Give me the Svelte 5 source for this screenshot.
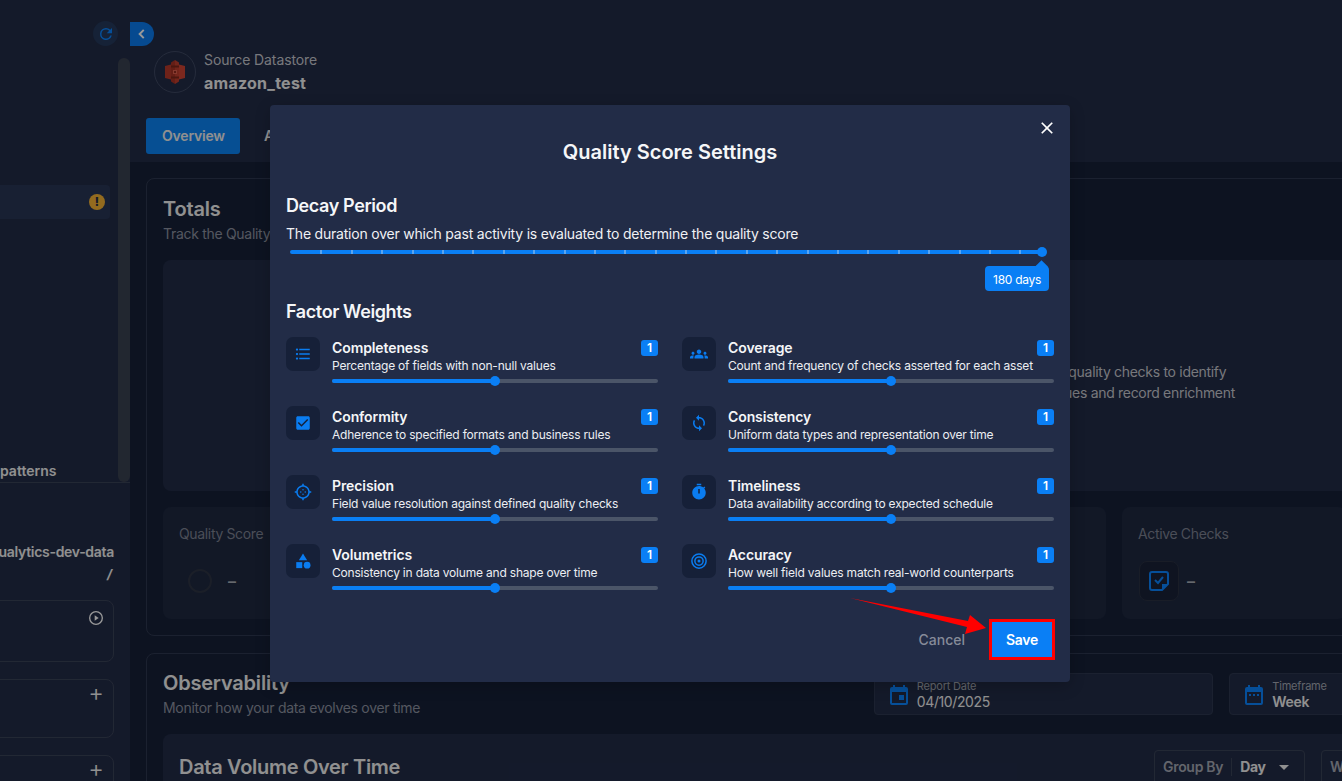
<script lang="ts">
	const factors = [
		{ name: 'Completeness', desc: 'Percentage of fields with non-null values', icon: 'list' },
		{ name: 'Coverage', desc: 'Count and frequency of checks asserted for each asset', icon: 'groups' },
		{ name: 'Conformity', desc: 'Adherence to specified formats and business rules', icon: 'check' },
		{ name: 'Consistency', desc: 'Uniform data types and representation over time', icon: 'sync' },
		{ name: 'Precision', desc: 'Field value resolution against defined quality checks', icon: 'gps' },
		{ name: 'Timeliness', desc: 'Data availability according to expected schedule', icon: 'timer' },
		{ name: 'Volumetrics', desc: 'Consistency in data volume and shape over time', icon: 'shapes' },
		{ name: 'Accuracy', desc: 'How well field values match real-world counterparts', icon: 'target' }
	];

	const ticks = Array.from({ length: 24 }, (_, i) => i + 1);
</script>

<div class="page">
	<aside class="sidebar">
		<div class="refresh">
			<svg viewBox="0 0 24 24" width="18" height="18"><path fill="#0a84ff" d="M17.65 6.35A7.95 7.95 0 0 0 12 4a8 8 0 1 0 7.73 10h-2.08A6 6 0 1 1 12 6c1.66 0 3.14.69 4.22 1.78L13 11h7V4l-2.35 2.35z" /></svg>
		</div>
		<div class="side-scroll"></div>
		<div class="side-active">
			<span class="warn">!</span>
		</div>
		<div class="side-patterns">patterns</div>
		<div class="side-lower">
			<div class="bucket">ualytics-dev-data</div>
			<div class="slash">/</div>
			<div class="side-card tall">
				<svg viewBox="0 0 24 24" width="16" height="16"><circle cx="12" cy="12" r="9.5" fill="none" stroke="#fff" stroke-width="2" /><path fill="#fff" d="M10 8l6 4-6 4z" /></svg>
			</div>
			<div class="side-card"><span class="plus">+</span></div>
			<div class="side-card"><span class="plus">+</span></div>
		</div>
	</aside>

	<main class="main">
		<button class="collapse" aria-label="Collapse">
			<svg viewBox="0 0 24 24" width="14" height="14"><path fill="none" stroke="#fff" stroke-width="3.4" d="M15 5l-7 7 7 7" /></svg>
		</button>
		<header class="head">
			<div class="ds">
				<div class="logo">
					<svg viewBox="0 0 20 24" width="20" height="24">
						<path fill="#b83a2b" d="M0 6l6-1.500v15L0 18z" />
						<path fill="#cf4433" d="M20 6l-6-1.500v15l6-1.500z" />
						<path fill="#a83325" d="M6 2.500L10 0v24l-4-2.500z" />
						<path fill="#c23e2e" d="M14 2.500L10 0v24l4-2.500z" />
						<path fill="#7f261a" d="M6 5.500h8v2H6zM6 16.500h8v2H6z" />
						<path fill="#e0604e" d="M8 10h4v4H8z" />
						<path fill="#8f2b1f" d="M9 11h2v2H9z" />
					</svg>
				</div>
				<div>
					<div class="ds-kicker">Source Datastore</div>
					<div class="ds-name">amazon_test</div>
				</div>
			</div>
			<nav class="tabs">
				<span class="tab active">Overview</span>
				<span class="tab">Assets</span>
			</nav>
		</header>

		<div class="body">
			<section class="card totals">
				<h2>Totals</h2>
				<p class="sub">Track the Quality Score of your data over time</p>
				<div class="empty-panel">
					<p>Run profile operations and quality checks to identify<br />anomalies, data quality issues and record enrichment</p>
				</div>
				<div class="stats">
					<div class="stat">
						<span class="stat-label">Quality Score</span>
						<div class="stat-val"><span class="ring"></span><span class="dash">–</span></div>
					</div>
					<div class="stat"></div>
					<div class="stat"></div>
					<div class="stat"></div>
					<div class="stat">
						<span class="stat-label">Active Checks</span>
						<div class="stat-val">
							<span class="stat-icon">
								<svg viewBox="0 0 24 24" width="24" height="24"><path fill="none" stroke="#0a84ff" stroke-width="2" stroke-linejoin="round" d="M5 3h14a2 2 0 0 1 2 2v10l-6 6H5a2 2 0 0 1-2-2V5a2 2 0 0 1 2-2z" /><path fill="#0a84ff" d="M15 21l6-6h-6z" /><path fill="none" stroke="#0a84ff" stroke-width="2" d="M8 11l3 3 5-6" /></svg>
							</span>
							<span class="dash">–</span>
						</div>
					</div>
				</div>
			</section>

			<section class="card obs">
				<div class="obs-head">
					<div class="obs-title">
						<h2>Observability</h2>
						<p class="sub">Monitor how your data evolves over time</p>
					</div>
					<div class="field date">
						<svg viewBox="0 0 24 24" width="24" height="24"><path fill="#0a84ff" d="M19 4h-1V2h-2v2H8V2H6v2H5a2 2 0 0 0-2 2v14a2 2 0 0 0 2 2h14a2 2 0 0 0 2-2V6a2 2 0 0 0-2-2zm0 16H5V9h14v11zm-7-8h5v5h-5z" /></svg>
						<div>
							<div class="field-label">Report Date</div>
							<div class="field-val">04/10/2025</div>
						</div>
					</div>
					<div class="field frame">
						<svg viewBox="0 0 24 24" width="24" height="24"><path fill="#0a84ff" d="M19 4h-1V2h-2v2H8V2H6v2H5a2 2 0 0 0-2 2v14a2 2 0 0 0 2 2h14a2 2 0 0 0 2-2V6a2 2 0 0 0-2-2zm0 16H5V9h14v11zM7 11h2v2H7zm4 0h2v2h-2zm4 0h2v2h-2z" /></svg>
						<div>
							<div class="field-label">Timeframe</div>
							<div class="field-val bold">Week</div>
						</div>
					</div>
				</div>
				<div class="volume">
					<h3>Data Volume Over Time</h3>
					<div class="select">
						<span class="sel-label">Group By</span>
						<span class="sel-val">Day</span>
						<span class="caret"></span>
					</div>
					<div class="select second"><span class="sel-label">W</span></div>
				</div>
			</section>
		</div>
	</main>

	<div class="backdrop"></div>

	<div class="modal" role="dialog" aria-labelledby="qs-title">
		<button class="close" aria-label="Close">
			<svg viewBox="0 0 24 24" width="20" height="20"><path fill="#fff" d="M19 6.410 17.590 5 12 10.590 6.410 5 5 6.410 10.590 12 5 17.590 6.410 19 12 13.410 17.590 19 19 17.590 13.410 12z" /></svg>
		</button>
		<h1 id="qs-title">Quality Score Settings</h1>

		<h2 class="section first">Decay Period</h2>
		<p class="section-desc">The duration over which past activity is evaluated to determine the quality score</p>
		<div class="decay">
			<div class="decay-track">
				{#each ticks as t}
					<span class="tick" style:left="{t * 30.39}px"></span>
				{/each}
				<span class="decay-thumb"></span>
				<span class="bubble">180 days</span>
			</div>
		</div>

		<h2 class="section">Factor Weights</h2>
		<div class="grid">
			{#each factors as f}
				<div class="factor">
					<div class="ficon">
						<svg viewBox="0 0 24 24" width="18" height="18" fill="#0a7cf0">
							{#if f.icon === 'list'}
								<path d="M4 10.500c-.83 0-1.500.67-1.500 1.500s.67 1.500 1.500 1.500 1.500-.67 1.500-1.500-.67-1.500-1.500-1.500zm0-6c-.83 0-1.500.67-1.500 1.500S3.170 7.500 4 7.500 5.500 6.830 5.500 6 4.830 4.500 4 4.500zm0 12c-.83 0-1.500.68-1.500 1.500s.68 1.500 1.500 1.500 1.500-.68 1.500-1.500-.67-1.500-1.500-1.500zM7 19h14v-2H7v2zm0-6h14v-2H7v2zm0-8v2h14V5H7z" />
							{:else if f.icon === 'groups'}
								<path d="M12 12.750c1.630 0 3.070.39 4.240.9 1.080.48 1.760 1.560 1.760 2.730V18H6v-1.610c0-1.180.68-2.260 1.760-2.730 1.170-.52 2.610-.91 4.240-.91zM4 13c1.100 0 2-.9 2-2s-.9-2-2-2-2 .9-2 2 .9 2 2 2zm1.130 1.100c-.37-.06-.74-.1-1.130-.1-.99 0-1.930.21-2.780.58C.48 14.900 0 15.620 0 16.430V18h4.500v-1.610c0-.83.23-1.610.63-2.290zM20 13c1.100 0 2-.9 2-2s-.9-2-2-2-2 .9-2 2 .9 2 2 2zm4 3.430c0-.81-.48-1.530-1.220-1.850-.85-.37-1.790-.58-2.780-.58-.39 0-.76.04-1.130.1.4.68.63 1.460.63 2.290V18H24v-1.570zM12 6c1.660 0 3 1.340 3 3s-1.340 3-3 3-3-1.340-3-3 1.340-3 3-3z" />
							{:else if f.icon === 'check'}
								<path d="M19 3H5c-1.110 0-2 .9-2 2v14c0 1.100.89 2 2 2h14c1.110 0 2-.9 2-2V5c0-1.100-.89-2-2-2zm-9 14l-5-5 1.410-1.410L10 14.170l7.590-7.590L19 8l-9 9z" />
							{:else if f.icon === 'sync'}
								<path d="M12 4V1L8 5l4 4V6c3.310 0 6 2.690 6 6 0 1.010-.25 1.970-.7 2.800l1.460 1.460C19.540 15.030 20 13.570 20 12c0-4.420-3.580-8-8-8zm0 14c-3.310 0-6-2.690-6-6 0-1.010.25-1.970.7-2.800L5.240 7.740C4.460 8.970 4 10.430 4 12c0 4.420 3.580 8 8 8v3l4-4-4-4v3z" />
							{:else if f.icon === 'gps'}
								<path d="M20.940 11c-.46-4.170-3.770-7.480-7.940-7.940V1h-2v2.060C6.830 3.520 3.520 6.830 3.060 11H1v2h2.060c.46 4.170 3.770 7.480 7.940 7.940V23h2v-2.060c4.170-.46 7.480-3.770 7.940-7.940H23v-2h-2.060zM12 19c-3.870 0-7-3.130-7-7s3.130-7 7-7 7 3.130 7 7-3.130 7-7 7z" />
								<circle cx="12" cy="9" r="1" />
								<circle cx="12" cy="15" r="1" />
								<circle cx="9" cy="12" r="1" />
								<circle cx="15" cy="12" r="1" />
							{:else if f.icon === 'timer'}
								<path d="M15 1H9v2h6V1zm4.030 6.390l1.420-1.420c-.43-.51-.9-.99-1.410-1.410l-1.420 1.420C16.070 4.740 14.120 4 12 4c-4.970 0-9 4.030-9 9s4.020 9 9 9 9-4.030 9-9c0-2.120-.74-4.070-1.970-5.610z" />
								<rect x="11" y="8" width="2" height="6" fill="#162038" />
							{:else if f.icon === 'shapes'}
								<path d="M12 2l-5.500 9h11z" />
								<circle cx="17.500" cy="17.500" r="4.500" />
								<rect x="3" y="13.500" width="8" height="8" />
							{:else}
								<circle cx="12" cy="12" r="9.500" fill="none" stroke="#0a7cf0" stroke-width="2" />
								<circle cx="12" cy="12" r="5.500" fill="none" stroke="#0a7cf0" stroke-width="2" />
								<circle cx="12" cy="12" r="2" />
							{/if}
						</svg>
					</div>
					<div class="fbody">
						<div class="ftop">
							<span class="fname">{f.name}</span>
							<span class="fbadge">1</span>
						</div>
						<div class="fdesc">{f.desc}</div>
						<div class="ftrack">
							<span class="ffill" style:width="50%"></span>
							<span class="fthumb" style:left="50%"></span>
						</div>
					</div>
				</div>
			{/each}
		</div>

		<div class="actions">
			<button class="cancel">Cancel</button>
			<button class="save">Save</button>
		</div>
	</div>

	<svg class="arrow" width="150" height="50" viewBox="0 0 150 50">
		<path fill="#ff0000" d="M0 0 118 23 120 17 136 30 115 36 117 29z" />
	</svg>
</div>

<style>
	:global(body) {
		margin: 0;
		background: #172138;
	}

	.page {
		position: relative;
		display: flex;
		width: 1342px;
		height: 781px;
		overflow: hidden;
		font-family: Inter, 'Liberation Sans', sans-serif;
		color: #fff;
	}

	/* dims everything behind the dialog */
	.backdrop {
		position: absolute;
		inset: 0;
		background: rgba(0, 0, 0, 0.4);
	}

	.sidebar {
		position: relative;
		flex: 0 0 130px;
		height: 100%;
		background: #222c47;
		overflow: hidden;
	}

	.refresh {
		position: absolute;
		left: 93px;
		top: 21px;
		width: 25px;
		height: 25px;
		border-radius: 50%;
		background: #25395c;
		display: flex;
		align-items: center;
		justify-content: center;
	}

	.side-scroll {
		position: absolute;
		left: 118px;
		top: 58px;
		width: 12px;
		height: 424px;
		border-radius: 6px;
		background: #3a4150;
	}

	.side-active {
		position: absolute;
		left: 0;
		top: 185px;
		width: 110px;
		height: 34px;
		border-radius: 0 4px 4px 0;
		background: #293656;
	}

	.warn {
		position: absolute;
		left: 89px;
		top: 9px;
		width: 16px;
		height: 16px;
		border-radius: 50%;
		background: #f5b335;
		color: #222c47;
		font-size: 12px;
		font-weight: 800;
		line-height: 16px;
		text-align: center;
	}

	.side-patterns {
		position: absolute;
		left: 0;
		top: 462px;
		font-size: 14px;
		font-weight: 600;
		line-height: 17px;
		color: #f0f0f0;
	}

	.side-lower {
		position: absolute;
		left: -40px;
		right: 16px;
		top: 482px;
		padding-top: 60px;
		border-top: 1px solid #3a4358;
		display: flex;
		flex-direction: column;
		align-items: stretch;
		margin-right: -16px;
		padding-right: 16px;
	}

	.bucket {
		font-size: 14px;
		font-weight: 600;
		line-height: 17px;
		text-align: right;
		color: #f0f0f0;
		white-space: nowrap;
		letter-spacing: -0.3px;
	}

	.slash {
		margin: 6px 2px 17px 0;
		font-size: 13px;
		font-weight: 700;
		font-style: italic;
		line-height: 17px;
		text-align: right;
		color: #f0f0f0;
	}

	.side-card {
		height: 59px;
		margin-bottom: 17px;
		border: 1px solid #3a4358;
		border-radius: 8px;
		box-sizing: border-box;
		display: flex;
		justify-content: flex-end;
		padding: 9px 9px 0 0;
		color: #f0f0f0;
	}
	.side-card.tall {
		height: 62px;
	}

	.plus {
		margin: -5px 0 0;
		font-size: 24px;
		line-height: 18px;
		font-weight: 300;
	}

	.main {
		position: relative;
		flex: 1;
		min-width: 0;
		height: 100%;
	}

	.collapse {
		position: absolute;
		left: 0;
		top: 22px;
		width: 24px;
		height: 24px;
		padding: 0;
		border: 0;
		border-radius: 0 12px 12px 0;
		background: #0a7cf0;
		display: flex;
		align-items: center;
		justify-content: center;
	}

	.head {
		height: 162px;
		box-sizing: border-box;
		padding: 51px 16px 0 24px;
		background: #222c47;
		display: flex;
		flex-direction: column;
	}

	.ds {
		display: flex;
		align-items: center;
		gap: 8px;
		height: 42px;
	}

	.logo {
		width: 42px;
		height: 42px;
		box-sizing: border-box;
		border: 1px solid #3f4963;
		border-radius: 50%;
		display: flex;
		align-items: center;
		justify-content: center;
	}

	.ds-kicker {
		margin-top: -2px;
		font-size: 14px;
		line-height: 20px;
		color: #c7c9cf;
		letter-spacing: -0.1px;
	}

	.ds-name {
		margin-top: 3px;
		font-size: 16px;
		font-weight: 700;
		line-height: 20px;
		color: #f0f0f0;
		letter-spacing: 0.25px;
	}

	.tabs {
		display: flex;
		gap: 8px;
		margin: 25px 0 0 -8px;
	}

	.tab {
		height: 36px;
		padding: 0 16px;
		border-radius: 3px;
		font-size: 14px;
		font-weight: 600;
		line-height: 36px;
		color: #f0f0f0;
		letter-spacing: -0.2px;
	}
	.tab.active {
		background: #0a84f5;
		width: 62px;
	}

	.body {
		padding: 16px 0 0 16px;
		width: 1300px;
		display: flex;
		flex-direction: column;
		gap: 17px;
	}

	.card {
		box-sizing: border-box;
		border: 1px solid #2e3850;
		border-radius: 8px;
		padding: 16px;
	}

	.card h2 {
		margin: 0;
		font-size: 20px;
		font-weight: 600;
		line-height: 28px;
		color: #f0f0f0;
		letter-spacing: -0.2px;
	}

	.sub {
		margin: 1px 0 0;
		font-size: 14px;
		line-height: 20px;
		color: #8d92a0;
		letter-spacing: -0.3px;
		white-space: nowrap;
	}

	.totals {
		height: 458px;
	}

	.empty-panel {
		height: 231px;
		margin-top: 16px;
		box-sizing: border-box;
		padding: 101px 0 0 735px;
		border-radius: 8px;
		background: #222c47;
	}

	.empty-panel p {
		margin: 0;
		font-size: 14px;
		line-height: 21px;
		color: #c7c9cf;
		letter-spacing: -0.3px;
		white-space: nowrap;
	}

	.stats {
		display: grid;
		grid-template-columns: repeat(5, 223.75px);
		gap: 16px;
		margin-top: 16px;
	}

	.stat {
		height: 112px;
		box-sizing: border-box;
		padding: 18px 16px;
		border-radius: 8px;
		background: #1e2840;
	}

	.stat-label {
		display: block;
		font-size: 14px;
		line-height: 18px;
		color: #7d8292;
		letter-spacing: -0.35px;
	}

	.stat-val {
		display: flex;
		align-items: center;
		gap: 12px;
		height: 40px;
		margin-top: 18px;
	}

	.ring {
		width: 24px;
		height: 24px;
		margin: 0 4px 0 9px;
		box-sizing: border-box;
		border: 2px solid #2e3444;
		border-radius: 50%;
	}

	.stat-icon {
		width: 40px;
		height: 40px;
		margin: 0 -4px 0 1px;
		border: 1px solid #2a3142;
		border-radius: 8px;
		box-sizing: border-box;
		display: flex;
		align-items: center;
		justify-content: center;
		background: #1a2238;
	}

	.dash {
		font-size: 16px;
		font-weight: 600;
		color: #a9adb6;
	}

	.obs {
		height: 300px;
	}

	.obs-head {
		display: flex;
		align-items: flex-start;
		margin-top: -1px;
	}
	.obs-title {
		width: 712px;
	}

	.field {
		height: 42px;
		margin-top: 4px;
		box-sizing: border-box;
		border: 1px solid #2e3850;
		border-radius: 4px;
		background: #222c47;
		display: flex;
		align-items: center;
		gap: 6px;
		padding: 1px 0 0 12px;
	}
	.date {
		width: 340px;
	}
	.frame {
		width: 200px;
		margin-left: 16px;
	}

	.field-label {
		font-size: 11px;
		line-height: 13px;
		color: #a5a9b4;
		letter-spacing: -0.2px;
	}
	.field-val {
		font-size: 14px;
		line-height: 17px;
		color: #f0f0f0;
		letter-spacing: -0.4px;
	}
	.field-val.bold {
		font-weight: 600;
		letter-spacing: -0.3px;
	}

	.volume {
		height: 200px;
		margin-top: 16px;
		box-sizing: border-box;
		padding: 16px;
		border-radius: 8px;
		background: #222c47;
		display: flex;
		align-items: flex-start;
		gap: 16px;
	}

	.volume h3 {
		margin: 4px 0 0;
		width: 959px;
		font-size: 20px;
		font-weight: 600;
		line-height: 26px;
		color: #f0f0f0;
		letter-spacing: -0.3px;
	}

	.select {
		flex: 0 0 auto;
		width: 151px;
		height: 50px;
		box-sizing: border-box;
		border: 1px solid #3a4358;
		border-radius: 4px;
		display: flex;
		align-items: flex-start;
		padding: 7px 8px;
		font-size: 14px;
		line-height: 18px;
	}
	.select.second {
		width: 80px;
	}

	.sel-label {
		padding-right: 8px;
		border-right: 1px solid #3a4358;
		color: #a5a9b4;
		font-weight: 600;
		letter-spacing: -0.3px;
	}
	.select.second .sel-label {
		border-right: 0;
	}

	.sel-val {
		padding-left: 8px;
		font-weight: 700;
		color: #f0f0f0;
		letter-spacing: -0.3px;
	}

	.caret {
		margin: 7px 0 0 13px;
		border-left: 5px solid transparent;
		border-right: 5px solid transparent;
		border-top: 5px solid #f0f0f0;
	}

	.modal {
		position: absolute;
		left: 270px;
		top: 105px;
		width: 800px;
		height: 577px;
		box-sizing: border-box;
		padding: 35px 16px 0;
		border-radius: 4px;
		background: #222c47;
		box-shadow: 0 4px 16px rgba(0, 0, 0, 0.2);
	}

	.close {
		position: absolute;
		right: 13px;
		top: 13px;
		width: 20px;
		height: 20px;
		padding: 0;
		border: 0;
		background: none;
		display: flex;
	}

	h1 {
		margin: 0;
		font-size: 20px;
		font-weight: 600;
		line-height: 24px;
		text-align: center;
		color: #f5f6f8;
		letter-spacing: 0;
	}

	.section {
		margin: 0;
		font-size: 18px;
		font-weight: 600;
		line-height: 24px;
		color: #f5f6f8;
		letter-spacing: -0.4px;
	}
	.section.first {
		margin-top: 30px;
	}

	.section-desc {
		margin: 6px 0 0;
		font-size: 14px;
		line-height: 20px;
		color: #f0f1f4;
		letter-spacing: -0.21px;
	}

	.decay {
		height: 56px;
		padding: 6px 12px 0 4px;
		box-sizing: border-box;
	}

	.decay-track {
		position: relative;
		height: 4px;
		border-radius: 2px;
		background: #0a7ff5;
	}

	.tick {
		position: absolute;
		top: 0;
		width: 2px;
		height: 4px;
		background: #5ba5f0;
	}

	.decay-thumb {
		position: absolute;
		right: -5px;
		top: -3px;
		width: 10px;
		height: 10px;
		border-radius: 50%;
		background: #0a7ff5;
	}

	.bubble {
		position: absolute;
		right: -7px;
		top: 16px;
		width: 64px;
		height: 25px;
		border-radius: 4px;
		background: #0a7ff5;
		font-size: 12px;
		line-height: 27px;
		text-align: center;
		color: #fff;
		letter-spacing: -0.3px;
	}
	.bubble::before {
		content: '';
		position: absolute;
		right: 3px;
		top: -4px;
		width: 9px;
		height: 9px;
		background: #0a7ff5;
		transform: rotate(45deg);
	}

	.grid {
		display: grid;
		grid-template-columns: 372px 372px;
		column-gap: 24px;
		row-gap: 19px;
		margin-top: 13px;
	}

	.factor {
		display: flex;
		gap: 12px;
		height: 50px;
	}

	.ficon {
		flex: 0 0 34px;
		height: 34px;
		border-radius: 7px;
		background: #162038;
		display: flex;
		align-items: center;
		justify-content: center;
	}

	.fbody {
		flex: 1;
		min-width: 0;
	}

	.ftop {
		display: flex;
		justify-content: space-between;
		align-items: flex-start;
		height: 21px;
		padding-top: 2px;
		box-sizing: border-box;
	}

	.fname {
		font-size: 14px;
		font-weight: 600;
		line-height: 17px;
		color: #f5f6f8;
		letter-spacing: -0.1px;
	}

	.fbadge {
		width: 17px;
		height: 16px;
		margin-top: 1px;
		border-radius: 3px;
		background: #0a7ff5;
		font-size: 12px;
		font-weight: 600;
		line-height: 16px;
		text-align: center;
		color: #fff;
	}

	.fdesc {
		font-size: 12px;
		line-height: 16px;
		color: #eceef2;
		letter-spacing: -0.2px;
		white-space: nowrap;
	}

	.ftrack {
		position: relative;
		height: 4px;
		margin-top: 5px;
		border-radius: 2px;
		background: #4b5568;
	}

	.ffill {
		position: absolute;
		left: 0;
		top: 0;
		height: 4px;
		border-radius: 2px;
		background: #0a7ff5;
	}

	.fthumb {
		position: absolute;
		top: -3px;
		width: 10px;
		height: 10px;
		margin-left: -5px;
		border-radius: 50%;
		background: #0a7ff5;
	}

	.actions {
		position: absolute;
		right: 18px;
		bottom: 25px;
		display: flex;
		align-items: center;
		gap: 27px;
	}

	.cancel {
		padding: 0;
		border: 0;
		background: none;
		font: 500 14px Inter, 'Liberation Sans', sans-serif;
		color: #868b99;
		letter-spacing: 0;
	}

	.save {
		width: 60px;
		height: 35px;
		padding: 0;
		border: 0;
		background: #0a7ff5;
		outline: 3px solid #ff0000;
		font: 600 14px Inter, 'Liberation Sans', sans-serif;
		color: #fff;
		letter-spacing: -0.3px;
	}

	.arrow {
		position: absolute;
		left: 850px;
		top: 598px;
	}
</style>
